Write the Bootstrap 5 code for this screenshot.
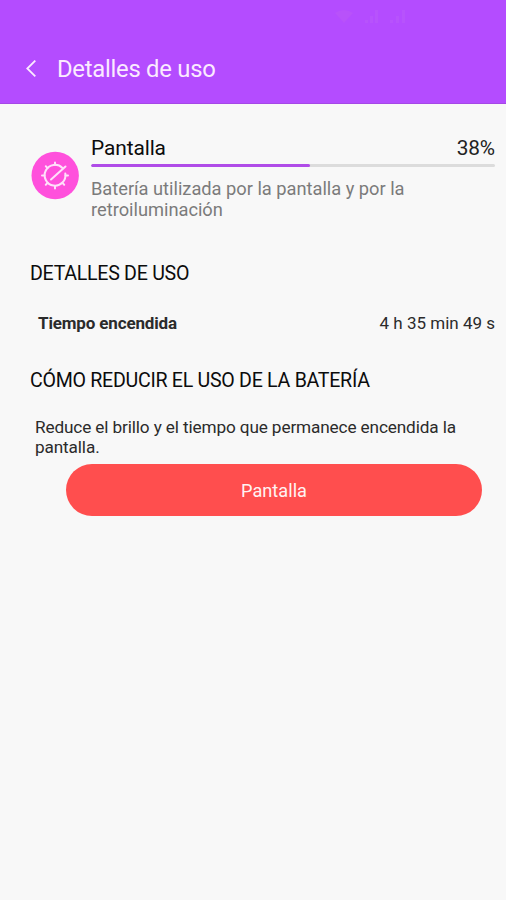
<!DOCTYPE html>
<html lang="es">
<head>
<meta charset="utf-8">
<meta name="viewport" content="width=device-width, initial-scale=1">
<title>Detalles de uso</title>
<link href="https://cdn.jsdelivr.net/npm/bootstrap@5.3.0/dist/css/bootstrap.min.css" rel="stylesheet">
<style>
body{background:#f8f8f8;font-family:Roboto,"Liberation Sans",sans-serif;color:#2b2b2b;min-height:900px;overflow:hidden}
.app-header{background:#b44cff;height:104px;border-bottom:1px solid #a548e6}
.status-line{height:35px;padding:10px 101px 0 0;gap:12px}
.app-title{font-size:23.8px;letter-spacing:-.25px;line-height:28px;color:#fbeaff;margin-left:20px}
.title-line{padding-left:25px;margin-top:20px}
.usage{padding:31px 11px 0 31px}
.usage-icon{margin-top:16px;margin-right:12px}
.usage-name{font-size:20.9px;letter-spacing:-.1px;line-height:26px;color:#0c0c0c}
.usage-pct{font-size:20.8px;letter-spacing:-.1px;line-height:26px;color:#222}
.usage-bar{height:3px;margin-top:3px;background:#dcdcdc;--bs-progress-bar-bg:#b04ce8}
.usage-text{font-size:18.3px;letter-spacing:-.02px;line-height:21px;color:#7b7b7b;margin-top:11px}
.section-title{font-size:19.6px;letter-spacing:-.28px;line-height:24px;color:#0c0c0c;padding-left:30px}
.section-usage{margin-top:42px}
.section-reduce{margin-top:35px}
.detail-line{font-size:17px;line-height:22px;padding:0 11px 0 38px;margin-top:26px}
.detail-name{letter-spacing:-.15px}
.tip{font-size:17.2px;letter-spacing:-.13px;line-height:20px;padding-left:35px;padding-right:40px;margin-top:24px}
.btn-screen{--bs-btn-bg:#ff4e4e;--bs-btn-color:#fff3f3;--bs-btn-hover-bg:#f24545;--bs-btn-hover-color:#fff;font-size:18.2px;line-height:22px;height:52px;border:0;padding-top:7px}
.action{padding:0 24px 0 66px;margin-top:7px}
</style>
</head>
<body>
<header class="app-header">
  <div class="status-line d-flex justify-content-end align-items-start">
    <svg width="18" height="13" viewBox="0 0 18 13"><path d="M0 3Q9-3 18 3L9 13Z" fill="#b852fa"/></svg>
    <svg width="13" height="13" viewBox="0 0 13 13"><path d="M0 13V10H3V13ZM5 13V6H8V13ZM10 13V0H13V13Z" fill="#b753fc"/></svg>
    <svg width="15" height="13" viewBox="0 0 15 13"><path d="M0 13V10H3V13ZM6 13V6H9V13ZM12 13V0H15V13Z" fill="#b753fc"/></svg>
  </div>
  <div class="title-line d-flex align-items-center">
    <svg width="12" height="18" viewBox="0 0 12 18" fill="none" stroke="#fbeaff" stroke-width="1.8"><path d="M10.3 .6 2.3 8.5 10.3 16.3"/></svg>
    <h1 class="app-title fw-normal mb-0">Detalles de uso</h1>
  </div>
</header>
<main>
  <section class="usage d-flex align-items-start">
    <svg class="usage-icon flex-shrink-0" width="48" height="49" viewBox="0 0 48 49" fill="none">
      <circle cx="24.2" cy="24.5" r="23.7" fill="#ff50dc"/>
      <g stroke="#ffe0fa" stroke-width="2" stroke-linecap="round">
        <path d="M31.5 17A10.4 10.4 0 1 0 34.3 22.5"/>
        <path d="M20 28.5 34.5 15.5"/>
        <path d="M24 11.5V14M24 35V37.5M11 24.5H13.5M34.5 24.5H37M14.8 15.3 16.6 17.1M14.8 33.7 16.6 31.9M33.2 33.7 31.4 31.9"/>
      </g>
    </svg>
    <div class="flex-grow-1">
      <div class="d-flex justify-content-between">
        <span class="usage-name">Pantalla</span><span class="usage-pct">38%</span>
      </div>
      <div class="progress usage-bar" role="progressbar" aria-label="Pantalla" aria-valuenow="54" aria-valuemin="0" aria-valuemax="100">
        <div class="progress-bar rounded-pill" style="width:54.2%"></div>
      </div>
      <p class="usage-text mb-0">Batería utilizada por la pantalla y por la<br>retroiluminación</p>
    </div>
  </section>
  <h2 class="section-title section-usage fw-normal mb-0">DETALLES DE USO</h2>
  <div class="detail-line d-flex justify-content-between">
    <span class="detail-name fw-bold">Tiempo encendida</span><span>4 h 35 min 49 s</span>
  </div>
  <h2 class="section-title section-reduce fw-normal mb-0">CÓMO REDUCIR EL USO DE LA BATERÍA</h2>
  <p class="tip mb-0">Reduce el brillo y el tiempo que permanece encendida la pantalla.</p>
  <div class="action d-grid">
    <button type="button" class="btn btn-screen rounded-pill">Pantalla</button>
  </div>
</main>
<script src="https://cdn.jsdelivr.net/npm/bootstrap@5.3.0/dist/js/bootstrap.bundle.min.js"></script>
</body>
</html>
